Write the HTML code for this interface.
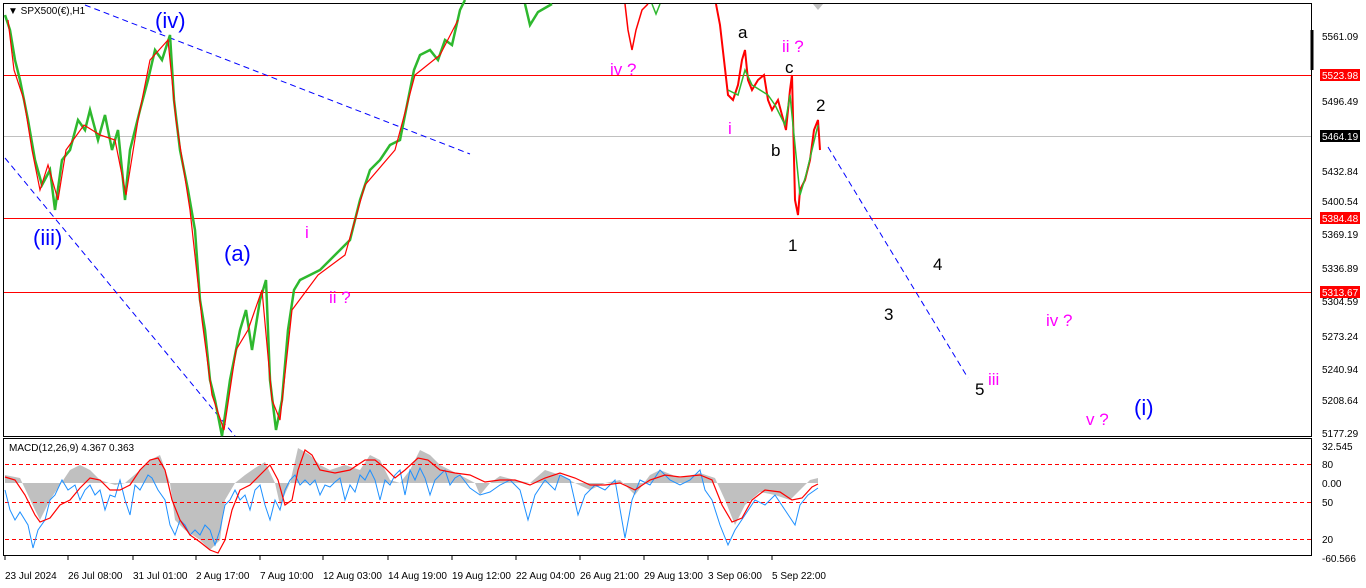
<!DOCTYPE html>
<html><head><meta charset="utf-8"><style>
html,body{margin:0;padding:0;background:#fff;}
body{width:1366px;height:588px;overflow:hidden;font-family:"Liberation Sans",sans-serif;}
svg{display:block}
</style></head><body>
<svg width="1366" height="588" viewBox="0 0 1366 588" xmlns="http://www.w3.org/2000/svg" font-family="Liberation Sans, sans-serif">
<rect width="1366" height="588" fill="#fff"/>
<rect x="3.5" y="3.5" width="1308" height="433" fill="none" stroke="#000"/>
<rect x="3.5" y="438.5" width="1308" height="117" fill="none" stroke="#000"/>
<line x1="1312" y1="30" x2="1312" y2="70" stroke="#000" stroke-width="3"/>
<text x="8" y="14" font-size="10" fill="#000">▼ SPX500(€),H1</text>
<polygon points="813,4 823,4 818,10" fill="#c0c0c0"/>

<line x1="4" y1="75.5" x2="1311" y2="75.5" stroke="#f00"/>
<line x1="4" y1="136.5" x2="1311" y2="136.5" stroke="#c0c0c0"/>
<line x1="4" y1="218.5" x2="1311" y2="218.5" stroke="#f00"/>
<line x1="4" y1="292.5" x2="1311" y2="292.5" stroke="#f00"/>

<g stroke="#00f" stroke-dasharray="6,4" fill="none">
<line x1="85" y1="5" x2="470" y2="154"/>
<line x1="5" y1="158" x2="235" y2="436"/>
<line x1="828" y1="147" x2="968" y2="378"/>
</g>

<polyline fill="none" stroke="#2eb82e" stroke-width="2.5" points="5,15 10,30 15,60 20,80 28,120 35,160 42,185 50,170 55,210 62,160 70,150 78,120 85,130 90,110 98,140 105,115 112,150 118,130 125,200 130,150 135,130 140,110 148,80 155,50 162,60 170,35 174,100 180,150 188,190 195,230 200,300 205,330 210,380 215,400 222,436 230,380 240,330 246,310 252,350 260,300 266,280 270,380 276,430 282,400 288,330 294,290 300,280 310,275 320,270 330,260 340,250 350,240 360,200 370,170 380,160 390,145 400,140 408,100 414,70 420,55 430,50 438,60 445,40 452,45 460,10 465,0"/>
<polyline fill="none" stroke="#f00" stroke-width="1.2" points="8,20 14,70 24,100 32,150 40,190 48,165 58,200 66,150 84,125 100,135 115,140 126,195 138,120 150,60 168,40 176,120 190,210 202,320 212,395 224,430 236,350 248,330 262,290 272,400 280,420 292,310 318,275 345,255 365,185 395,150 415,75 440,55 458,20"/>
<polyline fill="none" stroke="#2eb82e" stroke-width="2.5" points="525,4 530,25 538,12 545,8 552,4"/>
<polyline fill="none" stroke="#f00" stroke-width="1.5" points="625,4 628,30 632,50 636,30 642,10 648,4"/>
<polyline fill="none" stroke="#2eb82e" stroke-width="1.5" points="652,4 656,14 660,4"/>
<polyline fill="none" stroke="#f00" stroke-width="2" points="716,4 720,25 724,60 728,95 733,100 738,85 742,60 745,50 748,80 752,90 758,80 764,75 768,100 772,110 778,100 782,115 786,130 790,90 792,75 795,200 798,215 800,190 805,180 810,160 814,130 818,120 820,150"/>
<polyline fill="none" stroke="#2eb82e" stroke-width="1.5" points="728,90 738,95 745,70 752,85 760,90 768,95 775,105 785,125 790,95 800,195 806,175 812,150 818,125"/>

<g font-size="22">
<text x="155" y="28" fill="#00f">(iv)</text>
<text x="33" y="245" fill="#00f">(iii)</text>
<text x="224" y="261" fill="#00f">(a)</text>
<text x="1134" y="415" fill="#00f">(i)</text>
</g>
<g font-size="17" fill="#f0f">
<text x="305" y="238">i</text>
<text x="329" y="303">ii ?</text>
<text x="610" y="75">iv ?</text>
<text x="782" y="52">ii ?</text>
<text x="728" y="134">i</text>
<text x="988" y="385">iii</text>
<text x="1046" y="326">iv ?</text>
<text x="1086" y="425">v ?</text>
</g>
<g font-size="17" fill="#000">
<text x="738" y="38">a</text>
<text x="785" y="73">c</text>
<text x="816" y="111">2</text>
<text x="771" y="156">b</text>
<text x="788" y="251">1</text>
<text x="933" y="270">4</text>
<text x="884" y="320">3</text>
<text x="975" y="395">5</text>
</g>

<g font-size="10" fill="#000">
<text x="1322" y="40">5561.09</text>
<text x="1322" y="105">5496.49</text>
<text x="1322" y="175">5432.84</text>
<text x="1322" y="205">5400.54</text>
<text x="1322" y="238">5369.19</text>
<text x="1322" y="272">5336.89</text>
<text x="1322" y="305">5304.59</text>
<text x="1322" y="340">5273.24</text>
<text x="1322" y="373">5240.94</text>
<text x="1322" y="404">5208.64</text>
<text x="1322" y="437">5177.29</text>
<text x="1322" y="450">32.545</text>
<text x="1322" y="468">80</text>
<text x="1322" y="487">0.00</text>
<text x="1322" y="506">50</text>
<text x="1322" y="543">20</text>
<text x="1322" y="562">-60.566</text>
</g>
<rect x="1320" y="69" width="40" height="12" fill="#f00"/><text x="1322" y="79" font-size="10" fill="#fff">5523.98</text>
<rect x="1320" y="130" width="40" height="12" fill="#000"/><text x="1322" y="140" font-size="10" fill="#fff">5464.19</text>
<rect x="1320" y="212" width="40" height="12" fill="#f00"/><text x="1322" y="222" font-size="10" fill="#fff">5384.48</text>
<rect x="1320" y="286" width="40" height="12" fill="#f00"/><text x="1322" y="296" font-size="10" fill="#fff">5313.67</text>

<text x="9" y="451" font-size="10" fill="#000">MACD(12,26,9) 4.367 0.363</text>
<polygon fill="#c0c0c0" points="5,483 5,475 20,478 35,510 40,520 50,500 70,470 80,465 90,470 100,480 115,485 125,483 140,470 150,460 160,455 170,483 175,520 185,530 200,540 210,550 220,540 225,500 235,483 245,475 255,468 265,462 275,483 280,505 290,483 298,448 310,455 320,465 330,470 345,465 360,470 370,455 380,460 390,480 400,483 410,470 420,450 430,455 440,465 450,470 460,475 475,483 480,495 490,483 500,476 515,480 530,483 545,470 560,475 575,483 590,490 605,483 620,480 635,495 650,475 660,470 680,478 700,473 715,478 725,500 735,525 745,505 760,492 775,495 790,500 800,490 810,480 818,478 818,483"/>
<g stroke="#f00" stroke-dasharray="4,3" stroke-width="1">
<line x1="5" y1="464.5" x2="1311" y2="464.5"/>
<line x1="5" y1="502.5" x2="1311" y2="502.5"/>
<line x1="5" y1="539.5" x2="1311" y2="539.5"/>
</g>
<polyline fill="none" stroke="#1e90ff" stroke-width="1" points="5,490 10,510 15,520 20,512 28,525 33,548 38,530 45,520 50,500 55,495 62,480 68,490 75,485 80,500 85,490 90,485 95,495 100,490 105,510 110,495 115,497 120,480 125,500 130,515 135,485 140,490 148,475 152,478 158,490 165,500 170,525 175,535 180,520 185,525 190,535 195,530 200,535 205,525 210,530 215,545 220,530 225,505 230,500 235,490 240,500 245,495 250,510 255,490 260,485 265,505 270,520 275,500 280,510 285,490 290,480 295,475 300,485 305,480 310,485 315,480 320,495 325,485 330,487 335,482 340,478 345,500 350,485 355,492 360,475 365,480 370,470 375,480 380,500 385,480 390,485 395,475 400,470 405,495 410,470 415,480 420,468 425,478 430,495 435,480 440,475 445,470 450,485 455,478 460,475 470,488 480,495 490,492 500,485 510,480 520,490 528,520 535,495 545,480 555,490 560,475 570,480 578,515 585,495 595,485 605,490 615,480 625,538 632,500 640,480 650,485 660,470 670,480 680,485 690,480 700,470 705,490 712,500 720,525 728,545 735,530 745,515 755,500 765,505 775,495 785,510 795,525 800,505 808,495 818,488"/>
<polyline fill="none" stroke="#f00" stroke-width="1.2" points="5,477 15,480 25,495 35,515 40,522 50,518 60,505 70,500 80,488 90,478 100,480 110,490 120,490 130,485 140,470 150,460 158,458 165,470 172,500 180,520 190,535 200,542 210,550 218,553 225,540 232,510 240,490 250,485 260,475 270,465 278,480 285,505 292,500 298,470 305,450 312,455 320,470 335,473 350,470 365,460 375,460 385,468 395,478 405,470 418,458 428,460 440,470 455,473 470,475 485,482 500,480 515,480 530,485 545,478 560,473 575,478 590,485 605,485 620,483 635,490 650,480 665,475 680,477 700,475 712,480 722,505 732,522 742,518 752,500 765,490 780,492 792,500 802,498 812,487 818,484"/>

<g font-size="10" fill="#000">
<text x="5" y="579">23 Jul 2024</text>
<text x="68" y="579">26 Jul 08:00</text>
<text x="133" y="579">31 Jul 01:00</text>
<text x="196" y="579">2 Aug 17:00</text>
<text x="260" y="579">7 Aug 10:00</text>
<text x="323" y="579">12 Aug 03:00</text>
<text x="388" y="579">14 Aug 19:00</text>
<text x="452" y="579">19 Aug 12:00</text>
<text x="516" y="579">22 Aug 04:00</text>
<text x="580" y="579">26 Aug 21:00</text>
<text x="644" y="579">29 Aug 13:00</text>
<text x="708" y="579">3 Sep 06:00</text>
<text x="772" y="579">5 Sep 22:00</text>
</g>
<g stroke="#000">
<line x1="5" y1="556" x2="5" y2="560"/><line x1="68" y1="556" x2="68" y2="560"/><line x1="133" y1="556" x2="133" y2="560"/><line x1="196" y1="556" x2="196" y2="560"/><line x1="260" y1="556" x2="260" y2="560"/><line x1="323" y1="556" x2="323" y2="560"/><line x1="388" y1="556" x2="388" y2="560"/><line x1="452" y1="556" x2="452" y2="560"/><line x1="516" y1="556" x2="516" y2="560"/><line x1="580" y1="556" x2="580" y2="560"/><line x1="644" y1="556" x2="644" y2="560"/><line x1="708" y1="556" x2="708" y2="560"/><line x1="772" y1="556" x2="772" y2="560"/>
</g>
</svg>
</body></html>
